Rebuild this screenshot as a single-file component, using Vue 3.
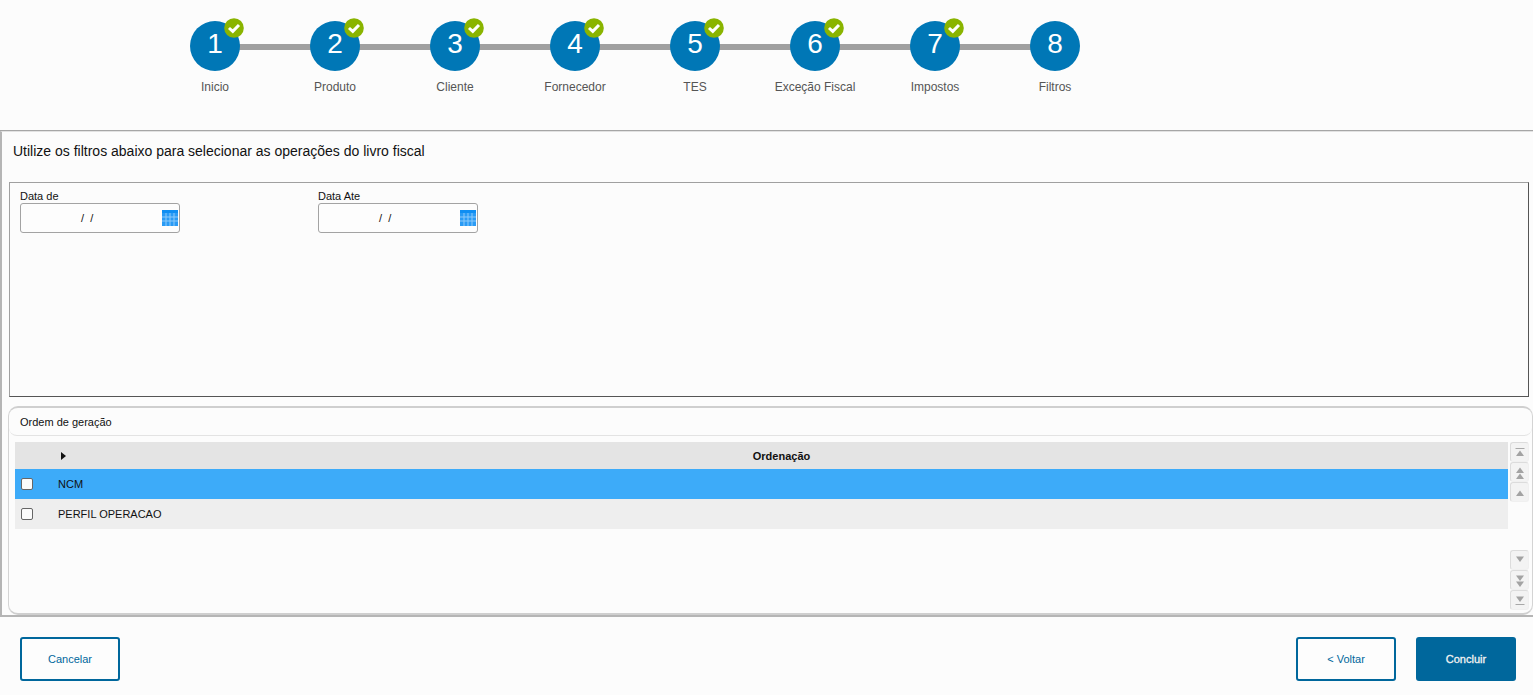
<script setup>
const steps = [
  { n: 1, label: 'Inicio', done: true },
  { n: 2, label: 'Produto', done: true },
  { n: 3, label: 'Cliente', done: true },
  { n: 4, label: 'Fornecedor', done: true },
  { n: 5, label: 'TES', done: true },
  { n: 6, label: 'Exceção Fiscal', done: true },
  { n: 7, label: 'Impostos', done: true },
  { n: 8, label: 'Filtros', done: false },
]
const dates = ['Data de', 'Data Ate']
const rows = [
  { label: 'NCM', selected: true },
  { label: 'PERFIL OPERACAO', selected: false },
]
const scrollUp = ['first', 'page', 'line']
const scrollDown = ['line', 'page', 'last']
</script>

<template>
  <div class="page">
    <header class="stepper">
      <div v-for="s in steps" :key="s.n" class="step" :class="{ last: s.n === 8 }">
        <div class="circle">
          {{ s.n }}
          <svg v-if="s.done" class="check" width="20" height="20" viewBox="0 0 20 20">
            <circle cx="10" cy="10" r="9.8" fill="#8ab400" />
            <path d="M5 10 8.8 13.4 15 7" fill="none" stroke="#fff" stroke-width="3" />
          </svg>
        </div>
        <div class="step-label">{{ s.label }}</div>
      </div>
    </header>

    <main class="panel">
      <p class="intro">Utilize os filtros abaixo para selecionar as operações do livro fiscal</p>

      <section class="filters">
        <div v-for="d in dates" :key="d" class="field">
          <label>{{ d }}</label>
          <div class="input">
            <span class="mask">/ &nbsp;/</span>
            <svg class="cal" width="16" height="16" viewBox="0 0 16 16">
              <rect width="16" height="16" fill="#2a9bf5" />
              <rect width="16" height="3" fill="#0f8ef2" />
              <path d="M0 7H16M0 11H16M4 3V16M8 3V16M12 3V16" stroke="#8ccafa" stroke-width="1" fill="none" />
            </svg>
          </div>
        </div>
      </section>

      <section class="order">
        <div class="order-title">Ordem de geração</div>
        <div class="order-body">
          <div class="grid">
            <div class="grid-head">
              <span class="sort"></span>
              <span class="head-title">Ordenação</span>
            </div>
            <div v-for="r in rows" :key="r.label" class="grid-row" :class="{ selected: r.selected }">
              <span class="box"></span>
              <span class="cell">{{ r.label }}</span>
            </div>
          </div>
          <div class="scroll">
            <div class="scroll-group">
              <div v-for="b in scrollUp" :key="b" class="sbtn">
                <svg width="12" height="20" viewBox="0 0 12 20">
                  <rect v-if="b === 'first'" x="1.5" y="6" width="9" height="1" fill="#a8a8a8" />
                  <path v-if="b === 'first'" d="M6 8.5 10 14H2Z" fill="#a3a3a3" />
                  <path v-if="b === 'page'" d="M6 5.5 10 11H2Z" fill="#a3a3a3" />
                  <path v-if="b === 'page'" d="M6 11.5 10 17H2Z" fill="#a3a3a3" />
                  <path v-if="b === 'line'" d="M6 8.5 10 14H2Z" fill="#a3a3a3" />
                </svg>
              </div>
            </div>
            <div class="scroll-group">
              <div v-for="b in scrollDown" :key="b" class="sbtn">
                <svg width="12" height="20" viewBox="0 0 12 20">
                  <path v-if="b === 'line'" d="M2 6.5H10L6 12Z" fill="#a3a3a3" />
                  <path v-if="b === 'page'" d="M2 5.5H10L6 11Z" fill="#a3a3a3" />
                  <path v-if="b === 'page'" d="M2 11.5H10L6 17Z" fill="#a3a3a3" />
                  <path v-if="b === 'last'" d="M2 6.5H10L6 12Z" fill="#a3a3a3" />
                  <rect v-if="b === 'last'" x="1.5" y="14" width="9" height="1" fill="#a8a8a8" />
                </svg>
              </div>
            </div>
          </div>
        </div>
      </section>
    </main>

    <footer class="footer">
      <button class="btn">Cancelar</button>
      <div class="right">
        <button class="btn">&lt; Voltar</button>
        <button class="btn primary">Concluir</button>
      </div>
    </footer>
  </div>
</template>

<style scoped>
.page {
  width: 1533px;
  height: 695px;
  overflow: hidden;
  background: #fcfcfc;
  font-family: "Liberation Sans", Arial, sans-serif;
  display: flex;
  flex-direction: column;
  box-sizing: border-box;
}
.stepper {
  height: 131px;
  flex: none;
  box-sizing: border-box;
  padding: 21px 0 0 155px;
  display: flex;
  border-bottom: 1px solid #a6a6a6;
}
.step {
  width: 120px;
  display: flex;
  flex-direction: column;
  align-items: center;
  position: relative;
}
.step::after {
  content: "";
  position: absolute;
  left: 60px;
  top: 23px;
  width: 120px;
  height: 6px;
  background: #a0a0a0;
}
.step.last::after {
  display: none;
}
.circle {
  width: 50px;
  height: 50px;
  border-radius: 50%;
  background: #0077b6;
  color: #fff;
  font-size: 28px;
  line-height: 45px;
  text-align: center;
  position: relative;
  z-index: 1;
}
.check {
  position: absolute;
  left: 34px;
  top: -3px;
}
.step-label {
  margin-top: 8px;
  font-size: 12px;
  line-height: 16px;
  color: #555;
  white-space: nowrap;
}
.panel {
  height: 486px;
  flex: none;
  box-sizing: border-box;
  border-left: 2px solid #b5b5b5;
  border-top: 1px solid #e2e2e2;
  border-bottom: 2px solid #b5b5b5;
  padding: 0 0 0 7px;
  display: flex;
  flex-direction: column;
}
.intro {
  margin: 11px 0 0 4px;
  font-size: 14px;
  line-height: 16px;
  color: #111;
  height: 39px;
}
.filters {
  height: 215px;
  flex: none;
  box-sizing: border-box;
  border: 1px solid #555;
  border-top-color: #a0a0a0;
  border-left-color: #a0a0a0;
  padding: 7px 10px;
  margin-right: 4px;
  display: flex;
  gap: 138px;
}
.field {
  width: 160px;
}
.field label {
  display: block;
  font-size: 11px;
  line-height: 13px;
  color: #111;
}
.input {
  height: 30px;
  box-sizing: border-box;
  border: 1px solid #a3a3a3;
  border-radius: 3px;
  display: flex;
  align-items: center;
  position: relative;
  padding-left: 60px;
  background: #fdfdfd;
}
.mask {
  font-size: 11px;
  color: #111;
}
.cal {
  position: absolute;
  right: 1px;
  top: 6px;
}
.order {
  margin: 9px 0 0 -1px;
  height: 209px;
  flex: none;
  box-sizing: border-box;
  border: 1px solid #d4d4d4;
  border-top: 2px solid #cfcfcf;
  border-bottom: 2px solid #cfcfcf;
  border-radius: 10px;
  display: flex;
  flex-direction: column;
}
.order-title {
  height: 28px;
  flex: none;
  box-sizing: border-box;
  border-bottom: 1px solid #e3e3e3;
  border-radius: 0 0 8px 8px;
  padding: 7px 0 0 11px;
  font-size: 11px;
  line-height: 14px;
  color: #111;
}
.order-body {
  flex: 1;
  display: flex;
  padding: 6px 2px 0 6px;
  min-height: 0;
}
.grid {
  width: 1493px;
  flex: none;
}
.grid-head {
  height: 27px;
  background: #e4e4e4;
  display: flex;
  align-items: center;
  position: relative;
}
.sort {
  position: absolute;
  left: 46px;
  top: 10px;
  width: 0;
  height: 0;
  border-left: 5px solid #111;
  border-top: 4px solid transparent;
  border-bottom: 4px solid transparent;
}
.head-title {
  flex: 1;
  text-align: center;
  font-size: 11px;
  font-weight: 700;
  color: #111;
  padding-left: 40px;
  padding-top: 1px;
}
.grid-row {
  height: 30px;
  background: #eeeeee;
  display: flex;
  align-items: center;
  font-size: 11px;
  color: #111;
}
.grid-row.selected {
  background: #3dabf9;
}
.box {
  width: 12px;
  height: 12px;
  box-sizing: border-box;
  margin-left: 6px;
  background: #fbfbfb;
  border: 1px solid #666;
  border-radius: 2px;
  flex: none;
}
.cell {
  margin-left: 25px;
}
.scroll {
  width: 19px;
  margin-left: 2px;
  flex: none;
  display: flex;
  flex-direction: column;
  justify-content: space-between;
  padding-bottom: 3px;
}
.scroll-group {
  display: flex;
  flex-direction: column;
}
.sbtn {
  height: 20px;
  box-sizing: border-box;
  border: 1px solid #dcdcdc;
  border-right-color: #f0f0f0;
  border-bottom-color: #f0f0f0;
  border-radius: 3px;
  background: #f3f3f3;
  display: flex;
  align-items: center;
  justify-content: center;
}
.footer {
  flex: 1;
  display: flex;
  justify-content: space-between;
  padding: 20px 17px 0 20px;
  align-items: flex-start;
}
.right {
  display: flex;
  gap: 20px;
}
.btn {
  width: 100px;
  height: 44px;
  box-sizing: border-box;
  border: 2px solid #00679c;
  border-radius: 3px;
  background: #fdfdfd;
  color: #00679c;
  font-family: "Liberation Sans", Arial, sans-serif;
  font-size: 11px;
  padding: 0;
}
.btn.primary {
  background: #00679c;
  color: #f3f3f3;
  -webkit-text-stroke: 0.3px #f3f3f3;
}
</style>
